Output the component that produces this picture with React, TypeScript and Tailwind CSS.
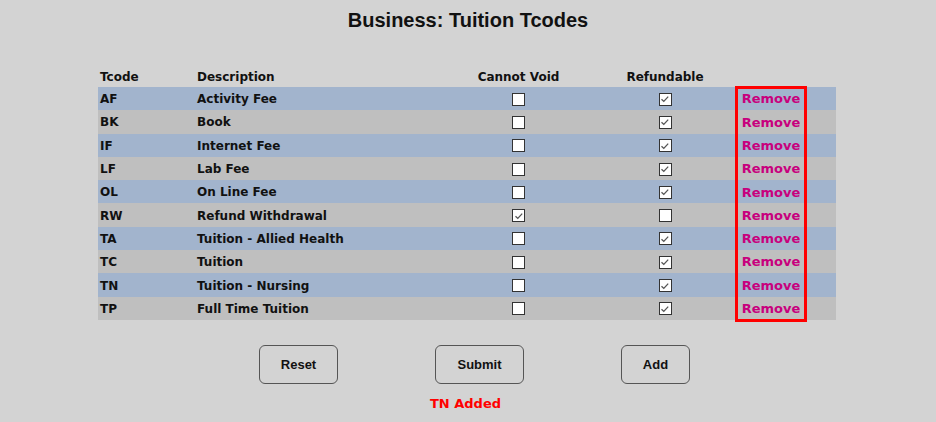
import { useState } from 'react';

type Tcode = { code: string; desc: string; noVoid: boolean; refund: boolean };

const initialCodes: Tcode[] = [
  { code: 'AF', desc: 'Activity Fee', noVoid: false, refund: true },
  { code: 'BK', desc: 'Book', noVoid: false, refund: true },
  { code: 'IF', desc: 'Internet Fee', noVoid: false, refund: true },
  { code: 'LF', desc: 'Lab Fee', noVoid: false, refund: true },
  { code: 'OL', desc: 'On Line Fee', noVoid: false, refund: true },
  { code: 'RW', desc: 'Refund Withdrawal', noVoid: true, refund: false },
  { code: 'TA', desc: 'Tuition - Allied Health', noVoid: false, refund: true },
  { code: 'TC', desc: 'Tuition', noVoid: false, refund: true },
  { code: 'TN', desc: 'Tuition - Nursing', noVoid: false, refund: true },
  { code: 'TP', desc: 'Full Time Tuition', noVoid: false, refund: true },
];

const cols = 'grid grid-cols-[97px_266px_115px_19px_140px_72px_1fr]';

const Box = ({ checked }: { checked: boolean }) => (
  <div className="w-[13px] h-[13px] border-[1.5px] border-[#333] bg-white flex items-center justify-center">
    {checked && (
      <svg width="10" height="10" viewBox="0 0 10 10">
        <polyline points="1.5,5.2 3.8,7.4 8.2,2.6" fill="none" stroke="#555" strokeWidth="1.3" />
      </svg>
    )}
  </div>
);

const App = () => {
  const [codes] = useState(initialCodes);

  return (
    <div className="w-[936px] h-[422px] bg-[#d3d3d3] text-[#111] font-['DejaVu_Sans',sans-serif] font-bold overflow-hidden">
      <h1 className="pt-[8px] text-center text-[20px] leading-[24px] font-bold font-['Liberation_Sans',Arial,sans-serif]">
        Business: Tuition Tcodes
      </h1>

      <div className="relative ml-[98px] mt-[34px] w-[738px] text-[12px]">
        <div className={`${cols} h-[21px] items-center`}>
          <div className="pl-[2px]">Tcode</div>
          <div className="pl-[2px]">Description</div>
          <div className="text-center">Cannot Void</div>
          <div />
          <div className="text-center">Refundable</div>
          <div />
          <div />
        </div>

        {codes.map((c, i) => (
          <div
            key={c.code}
            className={`${cols} h-[23.3px] items-center pt-[1px] ${i % 2 === 0 ? 'bg-[#a2b4cd]' : 'bg-[#bfbfbf]'}`}
          >
            <div className="pl-[2px]">{c.code}</div>
            <div className="pl-[2px]">{c.desc}</div>
            <div className="flex justify-center">
              <Box checked={c.noVoid} />
            </div>
            <div />
            <div className="flex justify-center">
              <Box checked={c.refund} />
            </div>
            <div className="text-center text-[13px] text-[#c8007d]">Remove</div>
            <div />
          </div>
        ))}

        <div className="absolute left-[637px] top-[20px] w-[72px] h-[236px] border-[3px] border-[#ff0000]" />
      </div>

      <div className="flex gap-[97px] ml-[259px] mt-[25px] font-['Liberation_Sans',Arial,sans-serif] text-[13px]">
        <button className="w-[79px] h-[39px] border border-[#555] rounded-[6px] font-bold">Reset</button>
        <button className="w-[89px] h-[39px] border border-[#555] rounded-[6px] font-bold">Submit</button>
        <button className="w-[69px] h-[39px] border border-[#555] rounded-[6px] font-bold">Add</button>
      </div>

      <div className="mt-[10px] text-center text-[13px] text-[#ff0000] pr-[5px]">TN Added</div>
    </div>
  );
};

export default App;
